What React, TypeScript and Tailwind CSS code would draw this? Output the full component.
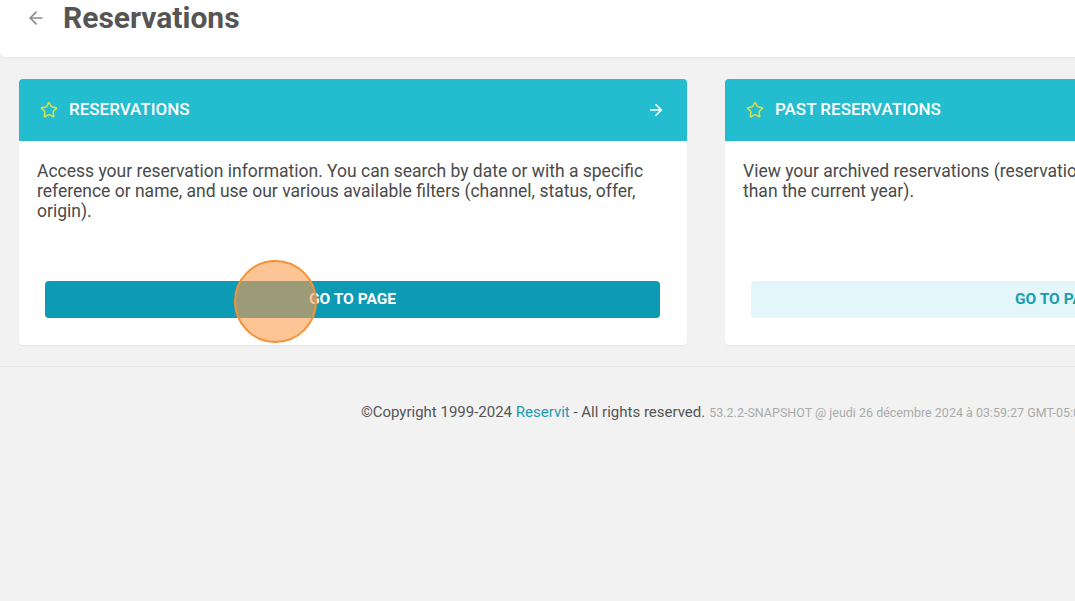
import { ArrowLeft, ArrowRight, Star } from "lucide-react";

type Card = {
  title: string;
  text: string;
  primary: boolean;
};

const cards: Card[] = [
  {
    title: "RESERVATIONS",
    text: "Access your reservation information. You can search by date or with a specific reference or name, and use our various available filters (channel, status, offer, origin).",
    primary: true,
  },
  {
    title: "PAST RESERVATIONS",
    text: "View your archived reservations (reservations with a departure date earlier than the current year).",
    primary: false,
  },
];

function ModuleCard({ card }: { card: Card }) {
  return (
    <div className="w-[668px] h-[266px] bg-white rounded-[4px] shadow-[0_1px_2px_rgba(0,0,0,0.06)] flex flex-col overflow-hidden">
      {/* Card header */}
      <div className="h-[62px] bg-[#24bccf] flex items-center pl-[21px] pr-[22px]">
        <Star className="w-[18px] h-[18px] text-[#d7e14a]" strokeWidth={2} />
        <span className="ml-[11px] text-white text-[17px] font-medium">{card.title}</span>
        {card.primary && (
          <ArrowRight className="ml-auto w-[18px] h-[18px] text-white" strokeWidth={2.25} />
        )}
      </div>

      {/* Card body */}
      <div className="flex-1 flex flex-col px-[18px] pt-[20px]">
        <p className="text-[17.5px] leading-[20px] text-[#4a4a4a] pr-[24px]">{card.text}</p>
        <div className="mt-auto mb-[27px] px-[8px]">
          <button
            className={
              card.primary
                ? "w-[615px] h-[37px] rounded-[4px] bg-[#0c9ab4] text-white text-[15.5px] font-bold"
                : "w-[615px] h-[37px] rounded-[4px] bg-[#e3f6f9] text-[#1a9cb3] text-[15.5px] font-bold"
            }
          >
            GO TO PAGE
          </button>
        </div>
      </div>
    </div>
  );
}

export default function App() {
  return (
    <div
      className="relative w-[1075px] h-[601px] overflow-hidden bg-[#f2f2f2]"
      style={{ fontFamily: "Roboto, 'Liberation Sans', sans-serif" }}
    >
      <div className="w-[1412px]">
        {/* Page header */}
        <div className="h-[57px] bg-white rounded-bl-[6px] shadow-[0_1px_3px_rgba(0,0,0,0.05)] flex items-start pt-[1px] pl-[26px]">
          <ArrowLeft className="mt-[7px] w-[20px] h-[20px] text-[#8a8a8a]" strokeWidth={2} />
          <h1 className="ml-[17px] text-[30px] leading-[34px] font-bold text-[#555555]">
            Reservations
          </h1>
        </div>

        {/* Cards */}
        <div className="flex gap-[38px] px-[19px] pt-[22px]">
          {cards.map((c) => (
            <ModuleCard key={c.title} card={c} />
          ))}
        </div>

        {/* Footer */}
        <div className="mt-[21px] border-t border-[#e8e8e8] pt-[34px] pl-[36px] flex justify-center items-baseline">
          <span className="text-[15px] text-[#555555]">
            ©Copyright 1999-2024 <span className="text-[#1a9cb3]">Reservit</span> - All rights reserved.
          </span>
          <span className="ml-[4px] text-[12.5px] text-[#aaaaaa]">
            53.2.2-SNAPSHOT @ jeudi 26 décembre 2024 à 03:59:27 GMT-05:00
          </span>
        </div>
      </div>

      {/* Click highlight */}
      <div className="absolute left-[234px] top-[260px] w-[83px] h-[83px] rounded-full border-[2px] border-[#f39237] bg-[#fb9d4f]/60" />
    </div>
  );
}
